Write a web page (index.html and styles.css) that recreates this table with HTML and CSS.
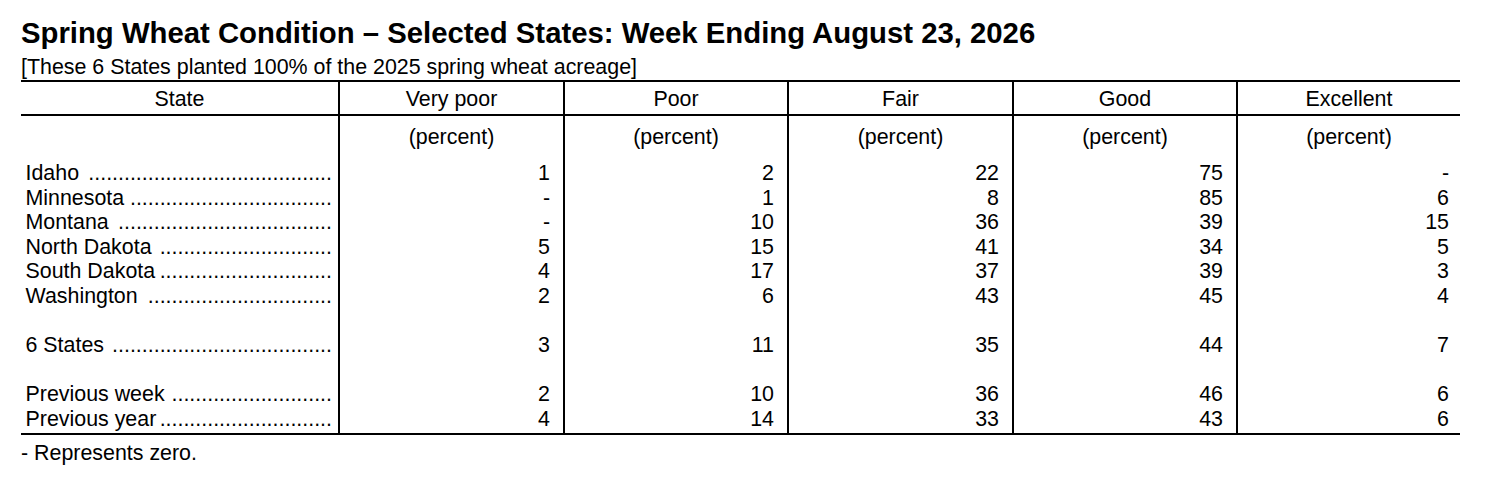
FILE: index.html
```html
<!DOCTYPE html>
<html lang="en">
<head>
<meta charset="utf-8">
<title>Spring Wheat Condition</title>
<link rel="stylesheet" href="styles.css">
</head>
<body>
<div class="page">
  <h1 class="title">Spring Wheat Condition – Selected States: Week Ending August 23, 2026</h1>
  <p class="subtitle">[These 6 States planted 100% of the 2025 spring wheat acreage]</p>
  <div class="table">
    <div class="head">
      <div class="row">
        <div class="cell c-state">State</div>
        <div class="cell c-num ctr">Very poor</div>
        <div class="cell c-num ctr">Poor</div>
        <div class="cell c-num ctr">Fair</div>
        <div class="cell c-num ctr">Good</div>
        <div class="cell c-num ctr last">Excellent</div>
      </div>
    </div>
    <div class="body">
      <div class="row units">
        <div class="cell c-state"></div>
        <div class="cell c-num ctr">(percent)</div>
        <div class="cell c-num ctr">(percent)</div>
        <div class="cell c-num ctr">(percent)</div>
        <div class="cell c-num ctr">(percent)</div>
        <div class="cell c-num ctr last">(percent)</div>
      </div>
      <div class="row">
        <div class="cell c-state"><span class="name">Idaho</span><span class="dots">.........................................</span></div>
        <div class="cell c-num">1</div><div class="cell c-num">2</div><div class="cell c-num">22</div><div class="cell c-num">75</div><div class="cell c-num last">-</div>
      </div>
      <div class="row">
        <div class="cell c-state"><span class="name">Minnesota</span><span class="dots">..................................</span></div>
        <div class="cell c-num">-</div><div class="cell c-num">1</div><div class="cell c-num">8</div><div class="cell c-num">85</div><div class="cell c-num last">6</div>
      </div>
      <div class="row">
        <div class="cell c-state"><span class="name">Montana</span><span class="dots">....................................</span></div>
        <div class="cell c-num">-</div><div class="cell c-num">10</div><div class="cell c-num">36</div><div class="cell c-num">39</div><div class="cell c-num last">15</div>
      </div>
      <div class="row">
        <div class="cell c-state"><span class="name">North Dakota</span><span class="dots">.............................</span></div>
        <div class="cell c-num">5</div><div class="cell c-num">15</div><div class="cell c-num">41</div><div class="cell c-num">34</div><div class="cell c-num last">5</div>
      </div>
      <div class="row">
        <div class="cell c-state"><span class="name">South Dakota</span><span class="dots">.............................</span></div>
        <div class="cell c-num">4</div><div class="cell c-num">17</div><div class="cell c-num">37</div><div class="cell c-num">39</div><div class="cell c-num last">3</div>
      </div>
      <div class="row">
        <div class="cell c-state"><span class="name">Washington</span><span class="dots">...............................</span></div>
        <div class="cell c-num">2</div><div class="cell c-num">6</div><div class="cell c-num">43</div><div class="cell c-num">45</div><div class="cell c-num last">4</div>
      </div>
      <div class="row blank">
        <div class="cell c-state"></div><div class="cell c-num"></div><div class="cell c-num"></div><div class="cell c-num"></div><div class="cell c-num"></div><div class="cell c-num last"></div>
      </div>
      <div class="row">
        <div class="cell c-state"><span class="name">6 States</span><span class="dots">.....................................</span></div>
        <div class="cell c-num">3</div><div class="cell c-num">11</div><div class="cell c-num">35</div><div class="cell c-num">44</div><div class="cell c-num last">7</div>
      </div>
      <div class="row blank">
        <div class="cell c-state"></div><div class="cell c-num"></div><div class="cell c-num"></div><div class="cell c-num"></div><div class="cell c-num"></div><div class="cell c-num last"></div>
      </div>
      <div class="row">
        <div class="cell c-state"><span class="name">Previous week</span><span class="dots">...........................</span></div>
        <div class="cell c-num">2</div><div class="cell c-num">10</div><div class="cell c-num">36</div><div class="cell c-num">46</div><div class="cell c-num last">6</div>
      </div>
      <div class="row lastrow">
        <div class="cell c-state"><span class="name">Previous year</span><span class="dots">.............................</span></div>
        <div class="cell c-num">4</div><div class="cell c-num">14</div><div class="cell c-num">33</div><div class="cell c-num">43</div><div class="cell c-num last">6</div>
      </div>
    </div>
  </div>
  <p class="footnote">- Represents zero.</p>
</div>
</body>
</html>
```

FILE: styles.css
```css
html, body {
  margin: 0;
  padding: 0;
  background: #ffffff;
}

body {
  font-family: "Liberation Sans", Arial, sans-serif;
  color: #000000;
  font-size: 21.4px;
  line-height: 24.6px;
}

.page {
  padding: 16px 0 0 21px;
  width: 1439px;
}

.title {
  margin: 0;
  font-size: 29.3px;
  line-height: 34px;
  font-weight: bold;
  white-space: nowrap;
}

.subtitle {
  margin: 5px 0 0 0;
  white-space: nowrap;
}

.table {
  width: 1439px;
  border-top: 2px solid #000;
  border-bottom: 2px solid #000;
}

.head {
  border-bottom: 2px solid #000;
}

.row {
  display: grid;
  grid-template-columns: 317px 225px 224px 225px 224px 224px;
}

.cell {
  white-space: nowrap;
}

.head .cell {
  padding: 5.4px 0 2px 0;
}

.units .cell {
  padding: 9.4px 0 11.4px 0;
}

.blank .cell {
  height: 24.6px;
}

.lastrow .cell {
  padding-bottom: 2px;
}

.c-state {
  display: flex;
  justify-content: flex-start;
  padding: 0 6px 0 4.5px;
}

.head .c-state {
  justify-content: center;
  padding: 5.4px 0 2px 0;
}

.name {
  flex: none;
}

.dots {
  flex: none;
  margin-left: auto;
}

.c-num {
  border-left: 2px solid #000;
  text-align: right;
  padding-right: 13px;
}

.c-num.last {
  padding-right: 11px;
}

.c-num.ctr {
  text-align: center;
  padding-right: 0;
}

.footnote {
  margin: 5.4px 0 0 0;
  white-space: nowrap;
}
```
